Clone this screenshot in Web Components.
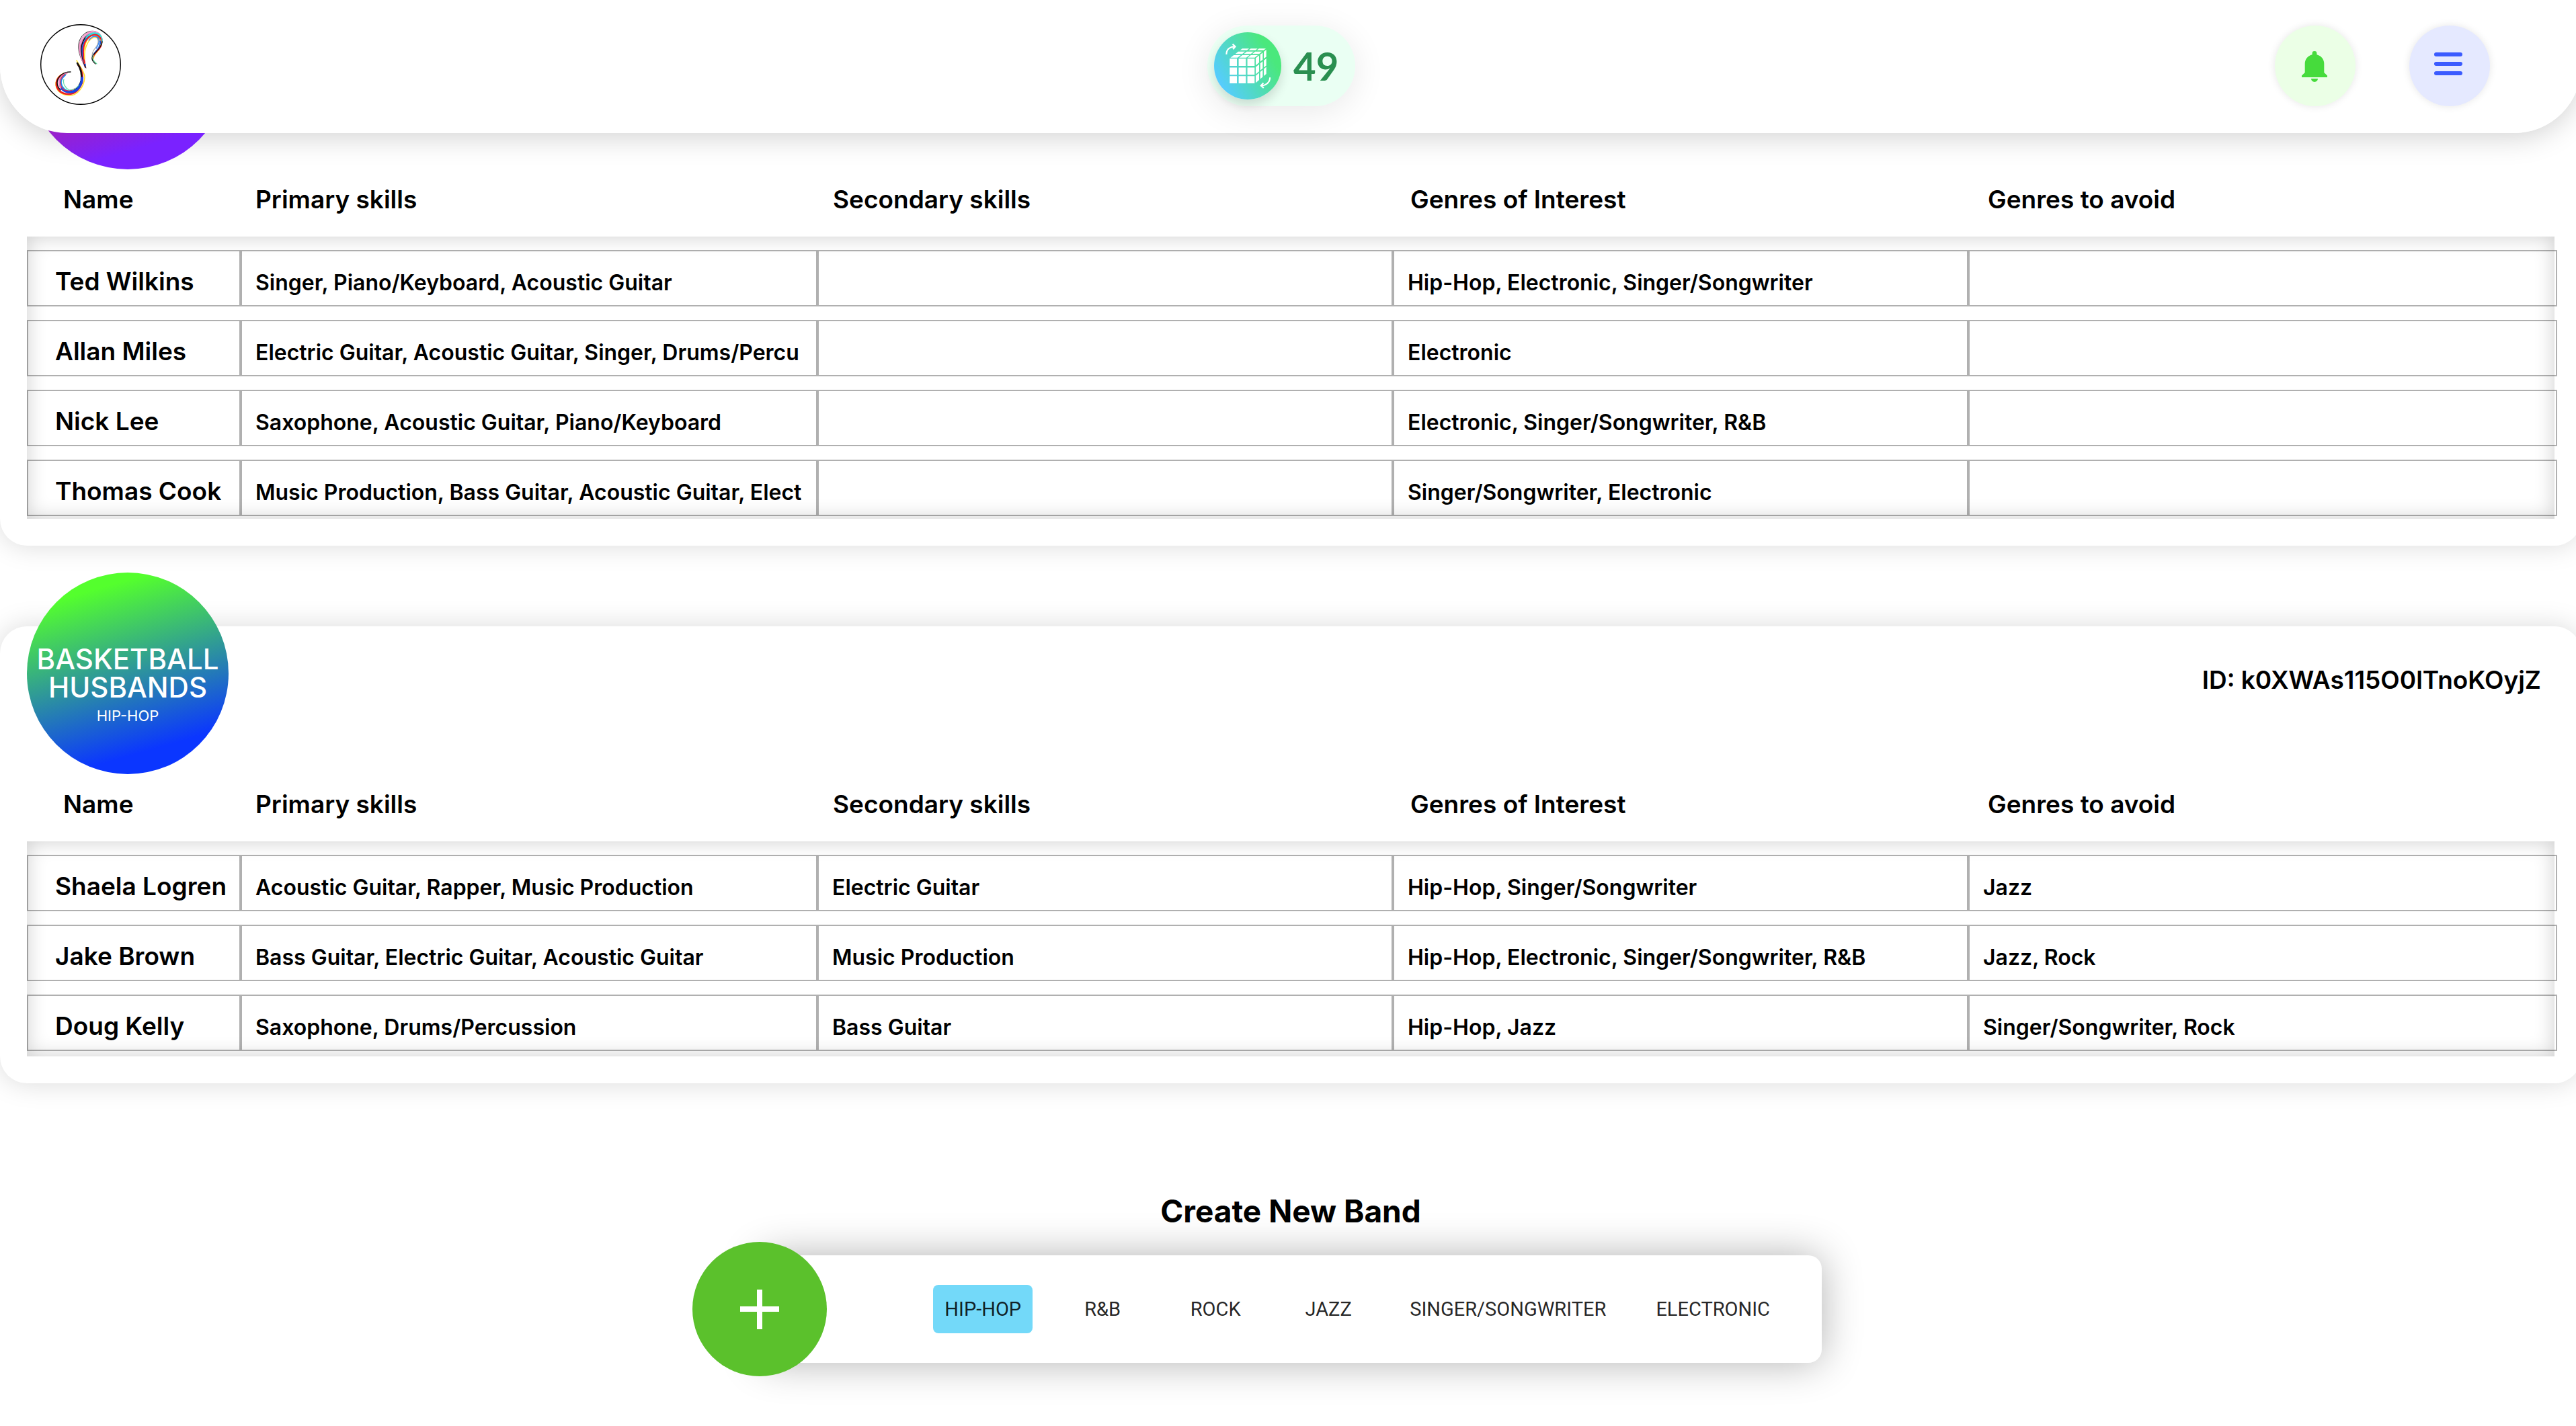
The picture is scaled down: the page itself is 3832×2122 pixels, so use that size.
<!DOCTYPE html>
<html lang="en">
<head>
<meta charset="utf-8">
<title>Bands</title>
<style>
  html { overflow-x: clip; background: #fff; }
  body { margin: 0; overflow-x: clip; color: #000; font-family: Inter, "Liberation Sans", sans-serif; }
</style>
</head>
<body>
<app-header>49</app-header>
<band-list></band-list>

<template id="t-header">
  <style>
    :host { display: block; }
    .shade, .bar { position: fixed; top: 0; left: 0; width: calc(100% + 8px); height: 198px; box-sizing: border-box; border-radius: 0 0 100px 100px; }
    .shade { z-index: 1; box-shadow: 0 8px 40px rgba(0,0,0,.17); }
    .bar { z-index: 3; background: #fff; display: grid; grid-template-columns: 1fr 220px 1fr; align-items: center; padding: 0 88px 2px 60px; }
    a, button { display: block; }
    svg { display: block; width: 100%; height: 100%; }
    .logo { width: 120px; height: 120px; margin-bottom: 4px; }
    .badge { display: flex; align-items: center; gap: 18px; height: 120px; padding-left: 10px; box-sizing: border-box; border-radius: 60px; background: #eafff3; box-shadow: 0 8px 50px rgba(0,0,0,.09); color: #2a8f50; font: 700 58px/70px Lato, sans-serif; }
    .cube { width: 100px; height: 100px; flex: none; border-radius: 50%; background: linear-gradient(60deg, #56ccff 14%, #4ae87c 78%); box-shadow: 0 8px 16px rgba(0,0,0,.14); }
    nav { display: flex; justify-content: flex-end; gap: 80px; margin-right: 48px; }
    button { width: 120px; height: 120px; padding: 0; border: 0; border-radius: 50%; box-shadow: 0 0 12px rgba(0,0,0,.1); cursor: pointer; }
    .bell { background: #ebffe6; }
    .menu { background: #e5e9ff; }
  </style>
  <div class="shade"></div>
  <header class="bar">
    <a class="logo" href="#" aria-label="Home">
      <svg viewBox="0 0 120 120" fill="none" stroke-linecap="round" stroke-width="1.5">
        <circle cx="60" cy="60" r="59.3" stroke="#000" stroke-width="1.4" fill="#fff"/>
        <g>
          <path stroke="#333" stroke-width="1" d="M68 65C60 52 54 38 58 25C62 14 72 8 82 11"/>
          <path stroke="#f08fc0" d="M67 65C60 50 56 38 59 27C63 15 73 9 82 11C90 13 94 22 91 30"/>
          <path stroke="#e98bc6" stroke-width="2.4" d="M67 63C61 50 58 37 61 28C65 17 73 11 81 13C90 15 92 25 89 32"/>
          <path stroke="#111" stroke-width="1.8" d="M67 64C62 50 59 38 62 30C64 23 68 17 74 15"/>
          <path stroke="#2fe0d6" stroke-width="2.8" d="M66 26C70 16 78 12 85 15C92 18 92 27 88 33"/>
          <path stroke="#1a4fd8" stroke-width="2" d="M67 61C62 47 61 37 64 29C68 20 75 15 82 17C90 19 91 28 87 35C82 42 78 44 78 50"/>
          <path stroke="#ffd91c" stroke-width="1.8" d="M66 58C63 46 64 37 67 29C70 20 77 14 84 17C94 21 92 30 87 38C82 44 79 46 79 51"/>
          <path stroke="#f0182c" stroke-width="2" d="M66 58C63 45 63 36 66 28C70 19 78 14 84 16C93 20 93 30 88 36C82 43 78 46 78 51"/>
          <path stroke="#35e6da" stroke-width="1.6" d="M68 20C73 13 82 11 88 15C92 19 93 24 91 30"/>
          <path stroke="#ffd91c" stroke-width="1.4" d="M66 52C65 42 67 34 71 27C76 19 84 17 89 24"/>
          <path stroke="#2f87ff" stroke-width="1.3" d="M72 24C77 17 84 16 87 23C88 28 86 32 83 36"/>
          <path stroke="#777" stroke-width=".8" d="M84 20C88 24 86 30 82 35C79 39 77 42 77 47"/>
          <path stroke="#111" stroke-width="1.3" d="M92 26C91 34 86 38 82 42C77 47 75 51 79 56L82 59"/>
          <path stroke="#65dfa0" stroke-width="1.2" d="M79 46C76 51 79 55 84 59"/>
        </g>
        <g>
          <path stroke="#ffe022" stroke-width="1.5" d="M54 54C58 62 66 70 66 79C65 94 55 106 44 106C32 106 22 99 23 87C24 81 28 76 35 73"/>
          <path stroke="#ee1b24" stroke-width="2.6" d="M56 60C62 68 64 78 62 87C57 100 50 104 42 104C31 104 23 97 24 87C25 80 31 74 39 73"/>
          <path stroke="#111" stroke-width="2.6" d="M55 58C61 67 62 77 61 84C59 91 55 96 50 99"/>
          <path stroke="#111" stroke-width="1.5" d="M45 71C33 71 25 79 25 87C25 91 27 95 30 98"/>
          <path stroke="#e88ac5" stroke-width="2.2" d="M39 73C30 77 27 83 28 89C29 97 37 101 44 101"/>
          <path stroke="#35d8e6" stroke-width="2.6" d="M37 75C31 80 29 86 32 92C36 99 43 101 49 99"/>
          <path stroke="#1646e8" stroke-width="3.6" d="M62 80C62 91 54 101 45 101C39 101 35 99 32 96"/>
          <path stroke="#2a78f0" stroke-width="1.6" d="M37 76C29 82 29 90 35 96"/>
          <path stroke="#e52645" stroke-width="1.2" d="M37 74C27 81 29 91 33 96C39 101 47 99 51 96"/>
          <path stroke="#69d9a8" stroke-width="1.2" d="M35 82C33 88 37 95 43 98C49 98 54 95 57 91"/>
        </g>
      </svg>
    </a>
    <div class="badge">
      <div class="cube"><svg viewBox="0 0 100 100" fill="#fff">
        <path id="faces"/>
        <g fill="none" stroke="#fff" stroke-width="2.2">
          <path d="M18.4 33C18.4 26 23 21.6 31 21.3M27.6 17.6L31.5 21.3L28.2 25.2"/>
          <path d="M83.2 67.3C83 75 77 79.4 70 79.4M73.4 75.6L69.8 79.4L73.8 82.8"/>
        </g></svg></div>
      <span><slot></slot></span>
    </div>
    <nav>
      <button class="bell" aria-label="Notifications"><svg viewBox="0 0 120 120" fill="#46db3c"><path d="M55.6 43.2V41.4a3.4 3.4 0 0 1 6.8 0V43.2C69 45 73.3 50 73.3 57V70L78 74.6V77H40V74.6L44.7 70V57C44.7 50 49 45 55.6 43.2ZM54 79H64A5 5 0 0 1 54 79Z"/></svg></button>
      <button class="menu" aria-label="Menu"><svg viewBox="0 0 120 120" stroke="#3b5bff" stroke-width="6" stroke-linecap="round"><path d="M40 43H76M40 57H76M40 71H76"/></svg></button>
    </nav>
  </header>
</template>

<template id="t-disc">
  <style>
    :host { display: block; position: relative; z-index: 2; box-sizing: border-box; width: 300px; height: 300px; padding-top: 108px; border-radius: 50%; text-align: center; color: #fff; background: linear-gradient(164deg, var(--from) 14%, var(--to) 82%); }
    h2 { margin: 0 auto; width: min-content; font-size: 42px; line-height: 42px; font-weight: 450; }
    p { margin: 8px 0 0; font-size: 22px; line-height: 26px; }
  </style>
  <h2><slot name="title"></slot></h2>
  <p><slot name="genre"></slot></p>
</template>

<template id="t-card">
  <style>
    :host { display: block; padding: 0 40px 40px; border-radius: 40px; background: #fff; box-shadow: 0 0 40px rgba(0,0,0,.15); }
    .top { display: flex; justify-content: space-between; align-items: flex-start; }
    band-disc { margin-top: -80px; }
    .id { margin: 0 20px 0 0; font-size: 37px; line-height: 160px; font-weight: 620; }
    table, thead { display: block; }
    th { font-size: 37px; font-weight: 620; text-align: left; padding: 0; }
    tr { display: grid; }
    thead tr { width: calc(100% + 16px); grid-template-columns: 340px repeat(4, 1fr); line-height: 90px; padding-bottom: 10px; }
    thead th:first-child { padding-left: 54px; }
    tbody { display: flex; flex-direction: column; gap: 20px; box-sizing: border-box; height: calc(var(--rows) * 100px + 20px); padding-top: 20px; box-shadow: inset 0 0 30px rgba(0,0,0,.2); }
    tbody tr { flex: none; width: calc(100% + 4px); grid-template-columns: 318px 858fr 856fr 856fr 876fr; }
    tbody th, td { display: block; box-sizing: border-box; height: 84px; min-width: 0; border: 2px solid rgba(0,0,0,.31); }
    tbody th { padding: 10px 0 0 40px; line-height: 70px; white-space: nowrap; }
    td { padding: 14px 20px 0; font-size: 32px; line-height: 66px; font-weight: 620; }
    td span { display: block; overflow: hidden; white-space: nowrap; }
  </style>
  <div class="top"><band-disc></band-disc><p class="id"></p></div>
  <table>
    <thead><tr><th scope="col">Name</th><th scope="col">Primary skills</th><th scope="col">Secondary skills</th><th scope="col">Genres of Interest</th><th scope="col">Genres to avoid</th></tr></thead>
    <tbody></tbody>
  </table>
</template>

<template id="t-create">
  <style>
    :host { display: flex; flex-direction: column; align-items: center; gap: 36px; }
    h1 { margin: 0; font-size: 46px; line-height: 60px; font-weight: 700; }
    .panel { display: flex; align-items: center; justify-content: space-between; box-sizing: border-box; width: 1580px; height: 160px; padding-right: 60px; border-radius: 20px; background: #fff; box-shadow: 0 0 60px rgba(0,0,0,.31); }
    .genres { display: flex; gap: 40px; }
    button { border: 0; cursor: pointer; }
    .add { width: 200px; height: 200px; margin: -20px 0 -20px -100px; padding: 0; border-radius: 50%; background: #5bc12c; }
    .add svg { display: block; }
    .genres button { min-width: 128px; height: 72px; padding: 0 17px; border-radius: 8px; background: none; color: rgba(0,0,0,.87); font: 400 29px/72px Roboto, sans-serif; }
    .genres [aria-pressed=true] { background: #73d9f9; }
  </style>
  <h1>Create New Band</h1>
  <div class="panel">
    <button class="add" aria-label="Add band"><svg viewBox="0 0 200 200" stroke="#fff" stroke-width="8"><path d="M100 71V130M71 100H129"/></svg></button>
    <div class="genres"></div>
  </div>
</template>

<template id="t-list">
  <style>
    :host { display: block; width: calc(100% + 8px); box-sizing: border-box; padding: 32px 0 74px; }
    main { display: flex; flex-direction: column; gap: 120px; }
    create-band { margin-top: 40px; }
  </style>
  <main></main>
</template>

<script>
  const BANDS = [
    { name: '', genre: '', id: '', from: '#ff1c1c', to: '#7a22ff', members: [
      ['Ted Wilkins', 'Singer, Piano/Keyboard, Acoustic Guitar', '', 'Hip-Hop, Electronic, Singer/Songwriter', ''],
      ['Allan Miles', 'Electric Guitar, Acoustic Guitar, Singer, Drums/Percu', '', 'Electronic', ''],
      ['Nick Lee', 'Saxophone, Acoustic Guitar, Piano/Keyboard', '', 'Electronic, Singer/Songwriter, R&B', ''],
      ['Thomas Cook', 'Music Production, Bass Guitar, Acoustic Guitar, Elect', '', 'Singer/Songwriter, Electronic', '']
    ] },
    { name: 'BASKETBALL HUSBANDS', genre: 'HIP-HOP', id: 'ID: k0XWAs115O0lTnoKOyjZ', from: '#54ff2d', to: '#0b36ff', members: [
      ['Shaela Logren', 'Acoustic Guitar, Rapper, Music Production', 'Electric Guitar', 'Hip-Hop, Singer/Songwriter', 'Jazz'],
      ['Jake Brown', 'Bass Guitar, Electric Guitar, Acoustic Guitar', 'Music Production', 'Hip-Hop, Electronic, Singer/Songwriter, R&B', 'Jazz, Rock'],
      ['Doug Kelly', 'Saxophone, Drums/Percussion', 'Bass Guitar', 'Hip-Hop, Jazz', 'Singer/Songwriter, Rock']
    ] }
  ];
  const GENRES = ['HIP-HOP', 'R&B', 'ROCK', 'JAZZ', 'SINGER/SONGWRITER', 'ELECTRONIC'];

  class Base extends HTMLElement {
    constructor(id) {
      super();
      this.attachShadow({ mode: 'open' }).append(document.getElementById(id).content.cloneNode(true));
    }
  }
  const el = (tag, text = '', attrs = {}) => {
    const e = document.createElement(tag);
    if (text) e.textContent = text;
    for (const k in attrs) e.setAttribute(k, attrs[k]);
    return e;
  };

  customElements.define('app-header', class extends Base {
    constructor() {
      super('t-header');
      // Tiles of the cube: each face is a 3x3 set of quads mapped onto its plane.
      const face = (map, us, vs) => us.flatMap(([a, b]) => vs.map(([c, d]) =>
        'M' + [map(a, c), map(b, c), map(b, d), map(a, d)].map(p => p.map(n => n.toFixed(2)).join(' ')).join('L') + 'Z')).join('');
      const even = [[0, .29], [.36, .65], [.71, 1]], depth = [[0, .28], [.4, .66], [.81, 1]];
      const front = face((u, v) => [23.3 + 37 * u, 39.3 + 36.7 * v], even, even);
      const top = face((u, v) => [24.5 + 36 * u + 17.5 * v - u * v, 37.8 - 13.6 * v], even, depth);
      const side = face((u, v) => [62 + 15.7 * u, (38.5 - 12.5 * u) + (36.8 - 0.8 * u) * v], [[0, .32], [.43, .66], [.77, 1]], even);
      this.shadowRoot.getElementById('faces').setAttribute('d', front + top + side);
    }
  });

  customElements.define('band-disc', class extends Base {
    constructor() { super('t-disc'); }
  });

  customElements.define('band-card', class extends Base {
    constructor() { super('t-card'); }
    set band(b) {
      const root = this.shadowRoot;
      const disc = root.querySelector('band-disc');
      disc.style.setProperty('--from', b.from);
      disc.style.setProperty('--to', b.to);
      disc.append(el('span', b.name, { slot: 'title' }), el('span', b.genre, { slot: 'genre' }));
      root.querySelector('.id').textContent = b.id;
      this.style.setProperty('--rows', b.members.length);
      root.querySelector('tbody').append(...b.members.map(([name, ...cells]) => {
        const tr = el('tr');
        tr.append(el('th', name, { scope: 'row' }), ...cells.map(c => {
          const td = el('td');
          td.append(el('span', c));
          return td;
        }));
        return tr;
      }));
    }
  });

  customElements.define('create-band', class extends Base {
    constructor() {
      super('t-create');
      const box = this.shadowRoot.querySelector('.genres');
      box.append(...GENRES.map((g, i) => el('button', g, { 'aria-pressed': i === 0 })));
      box.addEventListener('click', e => {
        if (e.target === box) return;
        for (const b of box.children) b.setAttribute('aria-pressed', b === e.target);
      });
    }
  });

  customElements.define('band-list', class extends Base {
    constructor() {
      super('t-list');
      this.shadowRoot.querySelector('main').append(...BANDS.map(b => {
        const card = document.createElement('band-card');
        card.band = b;
        return card;
      }), document.createElement('create-band'));
    }
  });
</script>
</body>
</html>
